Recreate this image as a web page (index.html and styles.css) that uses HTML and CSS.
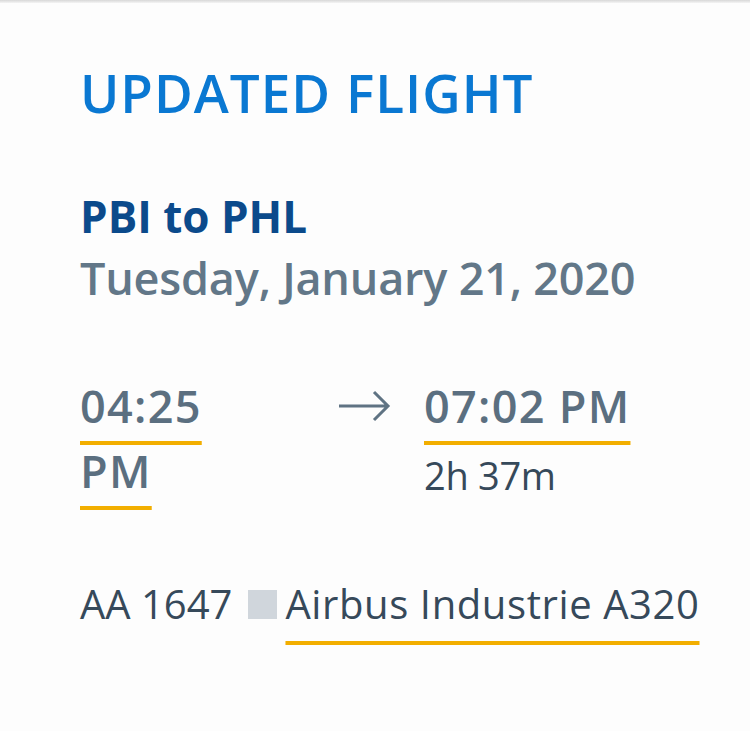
FILE: index.html
```html
<!DOCTYPE html>
<html>
<head>
<meta charset="utf-8">
<link rel="stylesheet" href="styles.css">
</head>
<body>
<div class="topbar"></div>
<main class="card">
  <h1 class="title">UPDATED FLIGHT</h1>
  <h2 class="route">PBI to PHL</h2>
  <p class="date">Tuesday, January 21, 2020</p>
  <div class="times">
    <div class="depart">
      <span class="time">04:25 PM</span>
    </div>
    <div class="arrow">
      <svg width="54" height="34" viewBox="0 0 54 34"><path d="M1 17 H50 M36 3 L50 17 L36 31" fill="none" stroke="#5f7383" stroke-width="3"/></svg>
    </div>
    <div class="arrive">
      <span class="time">07:02 PM</span>
      <div class="duration">2h 37m</div>
    </div>
  </div>
  <div class="equip">
    <span class="flightno">AA 1647</span>
    <span class="sq"></span>
    <span class="aircraft">Airbus Industrie A320</span>
  </div>
</main>
</body>
</html>
```

FILE: styles.css
```css
html, body {
  margin: 0;
  padding: 0;
  background: #fdfdfd;
}
body {
  font-family: "Open Sans", "Noto Sans", sans-serif;
  width: 750px;
  height: 731px;
  overflow: hidden;
}
.topbar {
  height: 3px;
  background: linear-gradient(#d8d8d8, #f4f4f4);
}
.card {
  padding: 0 40px 0 80px;
}
.title {
  margin: 0;
  padding-top: 54px;
  font-size: 53px;
  line-height: 72px;
  font-weight: 600;
  color: #0a78d2;
  letter-spacing: 1px;
}
.route {
  margin: 0;
  margin-top: 57px;
  font-size: 44px;
  line-height: 60px;
  font-weight: 700;
  color: #0b4a8b;
  letter-spacing: 0;
}
.date {
  margin: 0;
  font-size: 45px;
  line-height: 64px;
  font-weight: 600;
  color: #627788;
  letter-spacing: -0.2px;
}
.times {
  display: flex;
  align-items: flex-start;
  margin-top: 63px;
}
.depart {
  width: 160px;
}
.time {
  font-size: 45px;
  line-height: 65px;
  font-weight: 600;
  color: #5b6f80;
  text-decoration: underline;
  text-decoration-color: #f2ae00;
  text-decoration-thickness: 4px;
  text-underline-offset: 18px;
  letter-spacing: 1.3px;
}
.arrow {
  width: 86px;
  padding: 16px 0 0 98px;
}
.arrive {
  flex: 1;
}
.duration {
  font-size: 38px;
  line-height: 50px;
  color: #36495a;
  margin-top: 12px;
  letter-spacing: -0.3px;
}
.equip {
  display: flex;
  align-items: center;
  margin-top: 73px;
  font-size: 40px;
  line-height: 56px;
  color: #36495a;
  font-weight: 400;
}
.sq {
  width: 29px;
  height: 29px;
  background: #d0d6dc;
  margin: 0 8px 0 16px;
}
.aircraft {
  letter-spacing: 0.6px;
  text-decoration: underline;
  text-decoration-color: #f2ae00;
  text-decoration-thickness: 4px;
  text-underline-offset: 22px;
}
```
